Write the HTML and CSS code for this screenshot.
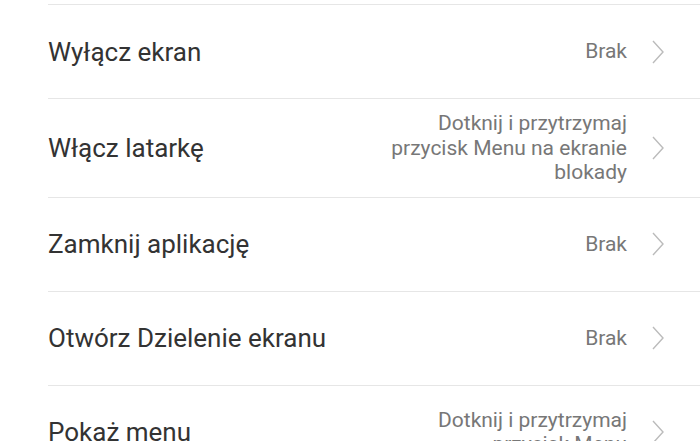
FILE: index.html
```html
<!DOCTYPE html>
<html lang="pl">
<head>
    <meta charset="UTF-8">
    <meta name="viewport" content="width=device-width, initial-scale=1.0">
    <title>Skróty przycisków</title>
    <link rel="stylesheet" href="styles.css">
</head>
<body>
    <div class="list">
        <div class="row">
            <div class="title">Wyłącz ekran</div>
            <div class="value">Brak</div>
            <svg class="chevron" viewBox="0 0 12 24"><polyline points="1,1 11,12 1,23"/></svg>
        </div>
        <div class="row">
            <div class="title">Włącz latarkę</div>
            <div class="value">Dotknij i przytrzymaj<br>przycisk Menu na ekranie<br>blokady</div>
            <svg class="chevron" viewBox="0 0 12 24"><polyline points="1,1 11,12 1,23"/></svg>
        </div>
        <div class="row">
            <div class="title">Zamknij aplikację</div>
            <div class="value">Brak</div>
            <svg class="chevron" viewBox="0 0 12 24"><polyline points="1,1 11,12 1,23"/></svg>
        </div>
        <div class="row">
            <div class="title">Otwórz Dzielenie ekranu</div>
            <div class="value">Brak</div>
            <svg class="chevron" viewBox="0 0 12 24"><polyline points="1,1 11,12 1,23"/></svg>
        </div>
        <div class="row">
            <div class="title">Pokaż menu</div>
            <div class="value">Dotknij i przytrzymaj<br>przycisk Menu</div>
            <svg class="chevron" viewBox="0 0 12 24"><polyline points="1,1 11,12 1,23"/></svg>
        </div>
    </div>
</body>
</html>
```

FILE: styles.css
```css
html, body {
    margin: 0;
    padding: 0;
    background-color: white;
    overflow: hidden;
}
body {
    font-family: Roboto, "Noto Sans", sans-serif;
    height: 441px;
}
.list {
    padding-top: 4px;
}
.row {
    display: flex;
    align-items: center;
    min-height: 94px;
    box-sizing: border-box;
    margin-left: 48px;
    padding: 12px 36px 12px 0;
    border-top: 1px solid #e6e6e6;
}
.title {
    flex: 1;
    font-size: 26px;
    color: #333333;
}
.value {
    font-size: 21px;
    line-height: 24.5px;
    color: #777777;
    text-align: right;
}
.chevron {
    width: 12px;
    height: 24px;
    margin-left: 25px;
    fill: none;
    stroke: #bbbbbb;
    stroke-width: 1.4;
}
```
